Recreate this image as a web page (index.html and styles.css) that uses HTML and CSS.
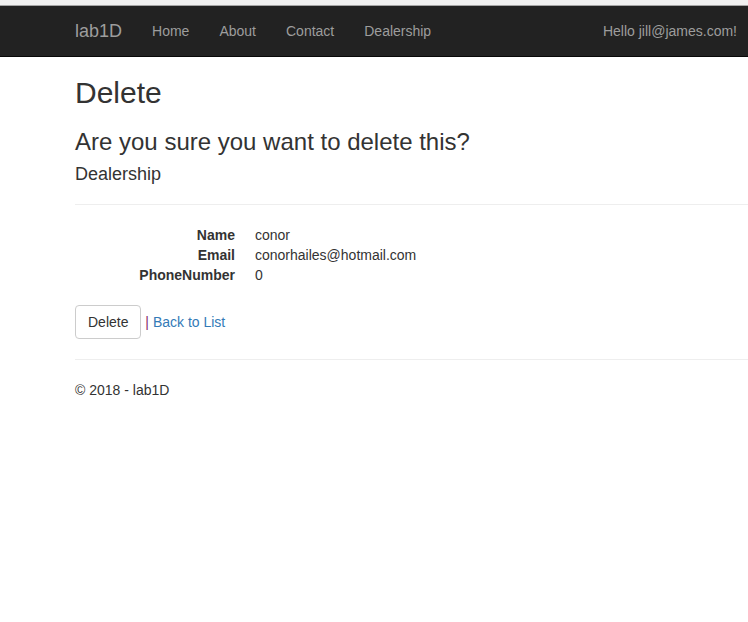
FILE: index.html
```html
<!DOCTYPE html>
<html>
<head>
<meta charset="utf-8">
<title>Delete - lab1D</title>
<link rel="stylesheet" href="styles.css">
</head>
<body>
<div class="topstrip"></div>
<nav class="navbar">
  <div class="nav-left">
    <a class="brand" href="#">lab1D</a>
    <a class="nav-link" href="#">Home</a>
    <a class="nav-link" href="#">About</a>
    <a class="nav-link" href="#">Contact</a>
    <a class="nav-link" href="#">Dealership</a>
  </div>
  <a class="nav-link nav-right" href="#">Hello jill@james.com!</a>
</nav>
<main class="content">
  <h2 class="title">Delete</h2>
  <h3 class="subtitle">Are you sure you want to delete this?</h3>
  <div>
    <h4 class="entity">Dealership</h4>
    <hr class="rule rule-top">
    <dl class="details">
      <div class="row"><dt>Name</dt><dd>conor</dd></div>
      <div class="row"><dt>Email</dt><dd>conorhailes@hotmail.com</dd></div>
      <div class="row"><dt>PhoneNumber</dt><dd>0</dd></div>
    </dl>
    <form class="actions">
      <button type="button" class="btn">Delete</button><span class="sep"> | </span><a class="link" href="#">Back to List</a>
    </form>
  </div>
  <hr class="rule">
  <footer class="footer">
    <p>&copy; 2018 - lab1D</p>
  </footer>
</main>
</body>
</html>
```

FILE: styles.css
```css
* { box-sizing: border-box; }
html, body {
  margin: 0;
  padding: 0;
  background: #fff;
}
body {
  font-family: "Liberation Sans", Arial, Helvetica, sans-serif;
  font-size: 14px;
  line-height: 20px;
  color: #333;
  overflow: hidden;
}
.topstrip {
  height: 6px;
  background: #f0f0f0;
  border-bottom: 1px solid #a5a5a5;
}
.navbar {
  display: flex;
  justify-content: space-between;
  align-items: center;
  height: 51px;
  background: #222;
  border-bottom: 1px solid #080808;
  padding-left: 60px;
}
.nav-left {
  display: flex;
  align-items: center;
}
.brand {
  font-size: 18px;
  line-height: 20px;
  padding: 15px;
  color: #9d9d9d;
  text-decoration: none;
}
.nav-link {
  font-size: 14px;
  line-height: 20px;
  padding: 15px;
  color: #9d9d9d;
  text-decoration: none;
}
.nav-right {
  padding-right: 11px;
}
.content {
  padding: 19px 0 20px 75px;
}
.title {
  margin: 0 0 10px;
  font-size: 30px;
  line-height: 33px;
  font-weight: 500;
}
.subtitle {
  margin: 20px 0 10px;
  font-size: 24px;
  line-height: 26.4px;
  font-weight: 500;
}
.entity {
  margin: 10px 0 10px;
  font-size: 18px;
  line-height: 19.8px;
  font-weight: 500;
}
.rule {
  margin: 20px 0;
  border: 0;
  border-top: 1px solid #eee;
  height: 0;
}
.rule-top {
  margin-top: 19px;
}
.details {
  margin: 0 0 20px;
}
.row {
  display: flex;
}
.row dt {
  width: 160px;
  text-align: right;
  font-weight: bold;
  margin: 0;
}
.row dd {
  margin: 0 0 0 20px;
}
.actions {
  margin: 0;
}
.btn {
  font-family: inherit;
  font-size: 14px;
  line-height: 20px;
  padding: 6px 12px;
  border: 1px solid #ccc;
  border-radius: 4px;
  background: #fff;
  color: #333;
  cursor: pointer;
}
.sep {
  color: #862d6b;
}
.link {
  color: #337ab7;
  text-decoration: none;
}
.footer p {
  margin: 0 0 10px;
}
```
